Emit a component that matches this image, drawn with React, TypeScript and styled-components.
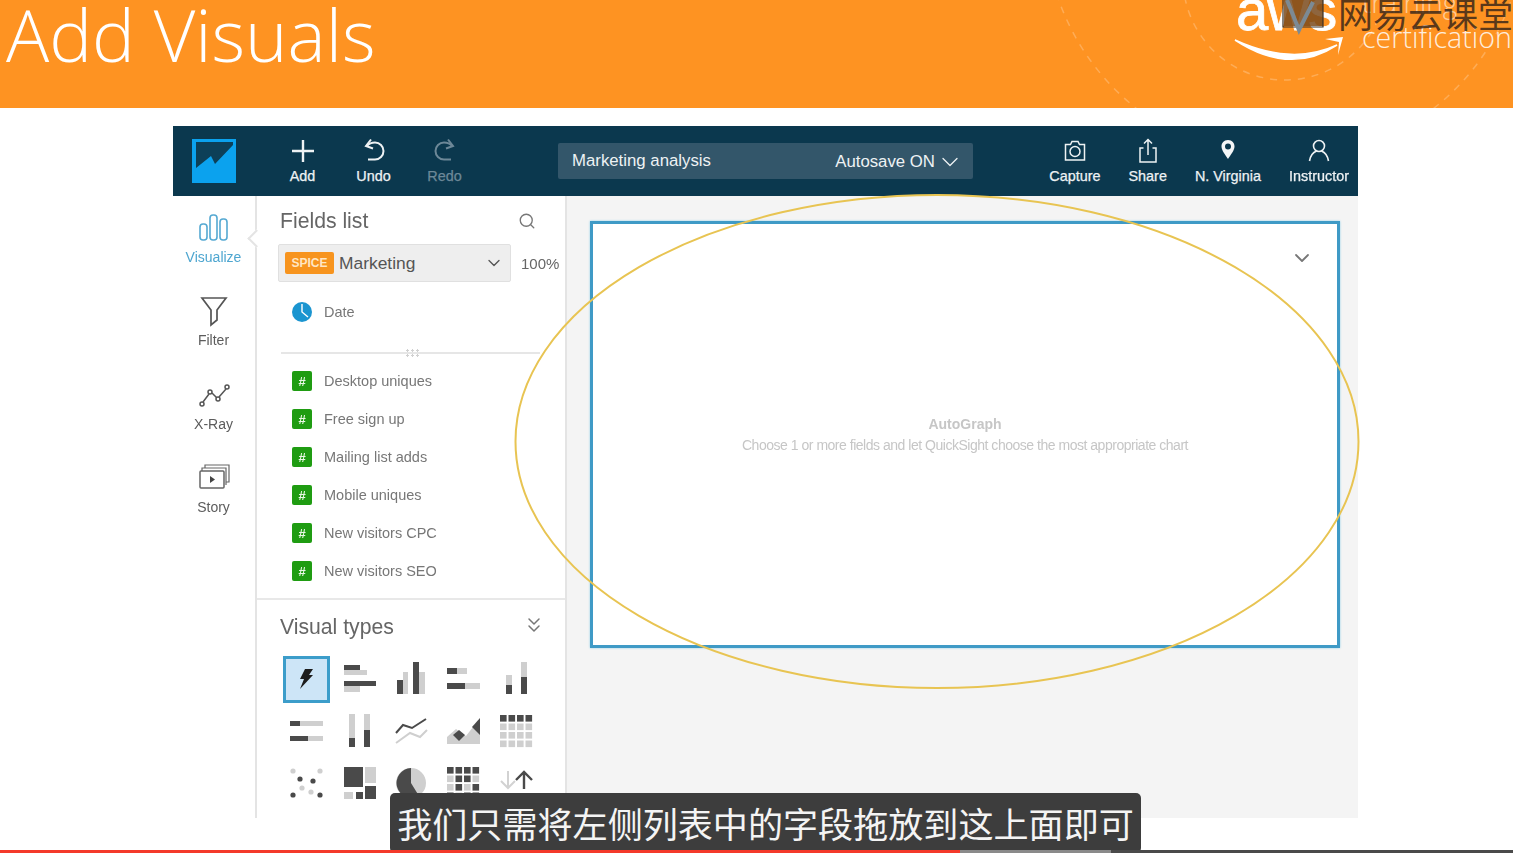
import React from "react";
import styled, { createGlobalStyle } from "styled-components";
import { Search, ChevronDown, ChevronsDown } from "lucide-react";

const Global = createGlobalStyle`
  html, body { margin: 0; padding: 0; background: #fff; }
  body { font-family: "Liberation Sans", Arial, sans-serif; }
`;

const Page = styled.div`
  position: relative;
  width: 1513px;
  height: 853px;
  overflow: hidden;
  background: #fff;
`;
const Blurred = styled.div`
  filter: blur(0.55px);
`;
const Banner = styled.header`
  position: relative;
  height: 108px;
  background: #fe9322;
  overflow: hidden;
  padding-left: 6px;
  box-sizing: border-box;
`;
const Title = styled.h1`
  margin: 0;
  font: 300 72px/69px "Open Sans", sans-serif;
  color: #fff;
`;
const BannerArt = styled.svg`
  position: absolute;
  inset: 0;
`;
const Watermark = styled.span`
  position: absolute;
  left: 1338px;
  top: -9px;
  font: 400 35px/44px "Noto Sans CJK SC", sans-serif;
  color: rgba(60, 40, 25, 0.85);
  white-space: nowrap;
`;
const Workspace = styled.main`
  width: 1185px;
  margin: 18px 0 0 173px;
`;
const Toolbar = styled.div`
  height: 70px;
  background: #0b384e;
  display: flex;
  align-items: center;
`;
const LogoCell = styled.div`
  width: 81px;
  padding-left: 19px;
  box-sizing: border-box;
  display: flex;
  align-items: center;
`;
const ToolGroup = styled.div`
  display: flex;
  margin-left: 13px;
`;
const Tool = styled.div<{ $muted?: boolean }>`
  width: 71px;
  display: flex;
  flex-direction: column;
  align-items: center;
  color: ${(p) => (p.$muted ? "#6d8898" : "#eef2f4")};
  font-size: 14.4px;
  line-height: 18px;
  -webkit-text-stroke: 0.25px currentColor;
  & > svg { height: 26px; margin-bottom: 3px; }
`;
const TitleBar = styled.div`
  width: 415px;
  height: 36px;
  margin-left: 78px;
  padding: 0 9px 0 14px;
  box-sizing: border-box;
  background: #33566a;
  border-radius: 2px;
  display: flex;
  align-items: center;
  justify-content: space-between;
  font-size: 16.8px;
  color: #eef2f4;
`;
const Autosave = styled.span`
  display: flex;
  align-items: center;
  gap: 1px;
  padding-top: 1px;
`;
const RightTools = styled.div`
  margin-left: auto;
  padding-right: 9px;
  display: flex;
  gap: 28px;
`;
const RightTool = styled.div`
  display: flex;
  flex-direction: column;
  align-items: center;
  color: #eef2f4;
  font-size: 14.4px;
  line-height: 18px;
  -webkit-text-stroke: 0.25px currentColor;
  & > svg { height: 26px; margin-bottom: 3px; }
`;
const Body = styled.div`
  display: flex;
  height: 622px;
`;
const Rail = styled.nav`
  position: relative;
  width: 84px;
  box-sizing: border-box;
  border-right: 2px solid #e4e4e4;
  padding: 16px 1px 0 0;
  &::after {
    content: "";
    position: absolute;
    right: -7.5px;
    top: 35.5px;
    width: 13px;
    height: 13px;
    box-sizing: border-box;
    background: #fff;
    border-left: 2px solid #e4e4e4;
    border-bottom: 2px solid #e4e4e4;
    transform: rotate(45deg);
  }
`;
const RailItem = styled.div<{ $active?: boolean }>`
  height: 83.4px;
  display: flex;
  flex-direction: column;
  align-items: center;
  color: ${(p) => (p.$active ? "#4ea6d0" : "#5c5c5c")};
  font-size: 14px;
  line-height: 18px;
  & > svg { margin-bottom: 4px; }
`;
const Panel = styled.aside`
  width: 310px;
  box-sizing: border-box;
  border-right: 2px solid #e4e4e4;
  display: flex;
  flex-direction: column;
`;
const FieldsSection = styled.section`
  height: 404px;
  box-sizing: border-box;
  border-bottom: 2px solid #e8e8e8;
  padding-left: 21px;
`;
const SectionHeader = styled.div`
  display: flex;
  align-items: center;
  justify-content: space-between;
  padding: 2px 29px 0 2px;
  height: 48px;
  box-sizing: border-box;
  color: #666;
  font-size: 21.2px;
`;
const SelectRow = styled.div`
  display: flex;
  align-items: center;
  gap: 10px;
  font-size: 15px;
  color: #666;
`;
const Select = styled.div`
  width: 233px;
  height: 38px;
  box-sizing: border-box;
  padding: 0 6px 0 6px;
  background: #eeeeee;
  border: 1px solid #e0e0e0;
  border-radius: 2px;
  display: flex;
  align-items: center;
  gap: 5px;
  color: #555;
  font-size: 17.4px;
`;
const Spice = styled.span`
  width: 49px;
  height: 22px;
  background: #f7941e;
  border-radius: 2px;
  display: flex;
  align-items: center;
  justify-content: center;
  color: #ffe6c4;
  font-size: 12px;
  font-weight: 700;
`;
const Grow = styled.span`
  flex: 1;
`;
const FieldRow = styled.div`
  height: 38px;
  display: flex;
  align-items: center;
  gap: 12px;
  padding-left: 14px;
  color: #777;
  font-size: 14.5px;
`;
const DateGroup = styled.div`
  margin-top: 11px;
`;
const Divider = styled.div`
  position: relative;
  margin: 21px 25px 8px 3px;
  height: 2px;
  background: #e6e6e6;
  &::after {
    content: "";
    position: absolute;
    left: 124px;
    top: -4px;
    width: 14px;
    height: 9px;
    background-image: radial-gradient(circle, #d0d0d0 1px, transparent 1.2px);
    background-size: 5px 5px;
  }
`;
const NumBadge = styled.span`
  width: 20px;
  height: 20px;
  background: #1f9c12;
  border-radius: 2px;
  color: #e8f7e4;
  font-size: 13px;
  font-weight: 700;
  display: flex;
  align-items: center;
  justify-content: center;
`;
const VisualSection = styled.section`
  padding-left: 23px;
`;
const VisualHeader = styled(SectionHeader)`
  height: 50px;
  padding: 3px 19px 0 0;
  & > svg { margin-top: -4px; }
`;
const VisualGrid = styled.div`
  display: grid;
  grid-template-columns: repeat(5, 52.4px);
  grid-auto-rows: 52px;
  margin-top: 3px;
`;
const VisualCell = styled.div`
  display: flex;
  align-items: center;
  justify-content: center;
`;
const SelectedBox = styled.div`
  width: 47px;
  height: 47px;
  box-sizing: border-box;
  background: #cde5f7;
  border: 3px solid #3c9dca;
  display: flex;
  align-items: center;
  justify-content: center;
`;
const Canvas = styled.section`
  flex: 1;
  background: #f4f4f4;
  padding: 25px 18px 0 23px;
`;
const Sheet = styled.div`
  position: relative;
  height: 427px;
  box-sizing: border-box;
  background: #fff;
  border: 3px solid #3f9ac6;
  box-shadow: 0 0 2px #8fd0ea;
  display: flex;
  flex-direction: column;
  align-items: center;
  justify-content: center;
  color: #c6c6c6;
  font-size: 14px;
  line-height: 21px;
  letter-spacing: -0.48px;
`;
const SheetTitle = styled.strong`
  font-weight: 700;
  letter-spacing: 0;
`;
const SheetMenu = styled.span`
  position: absolute;
  right: 23px;
  top: 22px;
  color: #777;
  display: flex;
`;
const Ellipse = styled.svg`
  position: absolute;
  inset: 0;
  pointer-events: none;
`;
const Caption = styled.div`
  position: absolute;
  left: 390px;
  top: 793px;
  width: 751px;
  height: 60px;
  box-sizing: border-box;
  padding-top: 3px;
  background: #3d3d3d;
  border-radius: 5px;
  color: #f4f4f4;
  text-align: center;
  font: 400 35.1px/54px "Noto Sans CJK SC", sans-serif;
  white-space: nowrap;
`;
const Progress = styled.div`
  position: absolute;
  left: 0;
  right: 0;
  bottom: 0;
  height: 3px;
  display: flex;
  background: #4a4a4a;
`;
const ProgressPart = styled.div<{ $w: number; $c: string }>`
  width: ${(p) => p.$w}px;
  background: ${(p) => p.$c};
`;

const D = "#4a4a4a";
const L = "#cfcfcf";
type R = [number, number, number, number, string];
const Bars = ({ r, x0, y0 }: { r: R[]; x0: number; y0: number }) => (
  <svg width="36" height="36" viewBox={`${x0} ${y0} 36 36`}>
    {r.map(([x, y, w, h, c], i) => (
      <rect key={i} x={x} y={y} width={w} height={h} fill={c} />
    ))}
  </svg>
);
const gridRects = (x: number, y: number, pattern: string[]): R[] =>
  pattern.flatMap((row, j) =>
    row.split("").map((ch, i): R => [x + i * 8.5, y + j * 8.5, 6.6, 6.6, ch === "d" ? D : L])
  );

const visualIcons: React.ReactNode[] = [
  <SelectedBox key="a">
    <svg width="22" height="24" viewBox="0 0 22 24">
      <path d="M10 2 L18 2 L14 8 L18 8 L5 22 L9 12 L5 12 Z" fill="#1d1d1d" />
    </svg>
  </SelectedBox>,
  <Bars key="b" x0={340} y0={661} r={[[343, 665, 16, 5, D], [343, 670, 23, 5, L], [343, 681, 32, 5, D], [343, 686, 16, 6, L]]} />,
  <Bars key="c" x0={393} y0={661} r={[[397, 680, 6, 14, D], [403, 672, 5, 22, L], [413, 662, 6, 32, D], [419, 672, 6, 22, L]]} />,
  <Bars key="d" x0={445} y0={661} r={[[447, 668, 10, 6, D], [457, 668, 10, 6, L], [447, 683, 18, 6, D], [465, 683, 15, 6, L]]} />,
  <Bars key="e" x0={498} y0={661} r={[[506, 675, 6, 10, L], [506, 685, 6, 9, D], [521, 662, 6, 15, L], [521, 677, 6, 17, D]]} />,
  <Bars key="f" x0={288} y0={713} r={[[290, 721, 10, 5, D], [300, 721, 23, 5, L], [290, 736, 18, 5, D], [308, 736, 15, 5, L]]} />,
  <Bars key="g" x0={340} y0={713} r={[[348, 714, 6, 24, L], [348, 738, 6, 9, D], [363, 714, 6, 16, L], [363, 730, 6, 17, D]]} />,
  <svg key="h" width="36" height="36" viewBox="393 713 36 36">
    <polyline points="396,743 410,733 420,737 427,730" fill="none" stroke={L} strokeWidth="2" />
    <polyline points="396,733 403,725 412,728 426,719" fill="none" stroke={D} strokeWidth="2" />
  </svg>,
  <svg key="i" width="36" height="36" viewBox="445 713 36 36">
    <polygon points="447,744 447,737 456,729 466,736 473,727 480,733 480,744" fill={L} />
    <polygon points="453,735 459,730 465,735 459,741" fill={D} />
    <polygon points="472,727 480,718 480,735" fill={D} />
  </svg>,
  <Bars key="j" x0={498} y0={713} r={gridRects(500, 715, ["dddd", "llll", "llll", "llll"])} />,
  <svg key="k" width="36" height="36" viewBox="288 765 36 36">
    {[[293, 771, L], [320, 771, L], [300, 779, D], [313, 781, D], [302, 788, L], [311, 792, L], [293, 795, D], [320, 795, D]].map(([x, y, c], i) => (
      <circle key={i} cx={x as number} cy={y as number} r="2.6" fill={c as string} />
    ))}
  </svg>,
  <Bars key="l" x0={340} y0={765} r={[[343, 767, 19, 20, D], [364, 767, 11, 16, L], [343, 792, 9, 7, L], [355, 792, 7, 7, D], [364, 786, 11, 13, D]]} />,
  <svg key="m" width="36" height="36" viewBox="393 765 36 36">
    <circle cx="411" cy="783" r="15" fill={L} />
    <path d="M411 783 L411 768 A15 15 0 1 0 419 796 Z" fill={D} />
  </svg>,
  <Bars key="n" x0={445} y0={765} r={gridRects(447, 767, ["dddd", "lddl", "ldld", "dldd"])} />,
  <svg key="o" width="36" height="36" viewBox="498 765 36 36">
    <path d="M508 771 V788 M501 781 L508 788 L515 781" fill="none" stroke="#d2d2d2" strokeWidth="2" />
    <path d="M524 789 V772 M516 780 L524 772 L532 780" fill="none" stroke={D} strokeWidth="2.4" />
  </svg>,
];

const fields = ["Desktop uniques", "Free sign up", "Mailing list adds", "Mobile uniques", "New visitors CPC", "New visitors SEO"];

const Logo = () => (
  <svg width="44" height="44" viewBox="0 0 44 44">
    <rect width="44" height="44" fill="#0ba2ee" />
    <polygon points="4,3 41,3 41,6 23,25 19,17 4,29" fill="#0d4058" />
  </svg>
);

const TurnArrow = ({ flip, color }: { flip?: boolean; color: string }) => (
  <svg width="28" height="26" viewBox="0 0 28 26" fill="none" stroke={color} strokeWidth="2">
    <g transform={flip ? "translate(28,0) scale(-1,1)" : undefined}>
      <path d="M7 8 C9 5.5 12 4.5 15 4.5 A8.5 8.5 0 0 1 15 21.5 H8" />
      <path d="M11 1.5 L6 8 L13 10.5" />
    </g>
  </svg>
);

export default function App() {
  return (
    <Page>
      <Global />
      <Blurred>
        <Banner>
          <Title>Add Visuals</Title>
          <BannerArt width="1513" height="108" viewBox="0 0 1513 108">
            <g fill="none" stroke="#ffffff" strokeOpacity="0.24" strokeWidth="1.5" strokeDasharray="7 7">
              <circle cx="1285" cy="-22" r="102" />
              <circle cx="1285" cy="-80" r="240" />
            </g>
            <text x="1236" y="30" fill="#fff" stroke="#fff" strokeWidth="0.8" fontFamily="Liberation Sans" fontSize="58" letterSpacing="-1">aws</text>
            <path d="M1235 40 Q1290 76 1337 45 Q1292 66 1235 40 Z" fill="#fff" stroke="#fff" strokeWidth="1.5" />
            <path d="M1325 39 L1343 37 L1338 55 L1339 42 Z" fill="#fff" />
            <text x="1362" y="13" fill="#fff" fillOpacity="0.55" fontFamily="Open Sans" fontWeight="300" fontSize="28">training</text>
            <text x="1362" y="48" fill="#fff" fillOpacity="0.85" fontFamily="Open Sans" fontWeight="300" fontSize="28.6">certification</text>
            <polygon points="1284,0 1323,0 1323,26 1284,26" fill="#7a4a1c" fillOpacity="0.85" />
            <path d="M1283 0 V27 H1323 V0" fill="none" stroke="#3b3026" strokeWidth="1.2" />
            <path d="M1287 0 L1299 30 L1313 2" fill="none" stroke="#7c8a94" strokeWidth="4" />
          </BannerArt>
          <Watermark>网易云课堂</Watermark>
        </Banner>
        <Workspace>
          <Toolbar>
            <LogoCell><Logo /></LogoCell>
            <ToolGroup>
              <Tool>
                <svg width="26" height="26" viewBox="0 0 26 26" fill="none" stroke="#eef2f4" strokeWidth="2.4">
                  <path d="M13 2 V24 M2 13 H24" />
                </svg>
                <span>Add</span>
              </Tool>
              <Tool><TurnArrow color="#eef2f4" /><span>Undo</span></Tool>
              <Tool $muted><TurnArrow flip color="#6d8898" /><span>Redo</span></Tool>
            </ToolGroup>
            <TitleBar>
              <span>Marketing analysis</span>
              <Autosave>Autosave ON <ChevronDown size={28} strokeWidth={1.1} /></Autosave>
            </TitleBar>
            <RightTools>
              <RightTool>
                <svg width="24" height="26" viewBox="0 0 24 26" fill="none" stroke="#eef2f4" strokeWidth="1.5">
                  <path d="M2.5 6.5 H7.5 L9 3.5 H15 L16.5 6.5 H21.5 V22 H2.5 Z" />
                  <circle cx="12" cy="13.5" r="5" />
                </svg>
                <span>Capture</span>
              </RightTool>
              <RightTool>
                <svg width="22" height="26" viewBox="0 0 22 26" fill="none" stroke="#eef2f4" strokeWidth="1.5">
                  <path d="M6.5 10 H3 V24 H19 V10 H15.5" />
                  <path d="M11 17 V2 M7 5.5 L11 1.5 L15 5.5" />
                </svg>
                <span>Share</span>
              </RightTool>
              <RightTool>
                <svg width="16" height="26" viewBox="0 0 16 26">
                  <path fillRule="evenodd" d="M8 2 C3.8 2 1.5 5 1.5 8.5 C1.5 12.5 5.5 17 8 21 C10.5 17 14.5 12.5 14.5 8.5 C14.5 5 12.2 2 8 2 Z M8 5.5 A3 3 0 1 1 8 11.5 A3 3 0 1 1 8 5.5 Z" fill="#f4f6f7" />
                </svg>
                <span>N. Virginia</span>
              </RightTool>
              <RightTool>
                <svg width="24" height="26" viewBox="0 0 24 26" fill="none" stroke="#eef2f4" strokeWidth="1.6">
                  <circle cx="12" cy="8" r="5.5" />
                  <path d="M2.5 23 C3.5 17 7 14 9.5 13 M21.5 23 C20.5 17 17 14 14.5 13" />
                </svg>
                <span>Instructor</span>
              </RightTool>
            </RightTools>
          </Toolbar>
          <Body>
            <Rail>
              <RailItem $active>
                <svg width="32" height="32" viewBox="0 0 32 32" fill="none" stroke="#55a9d2" strokeWidth="1.6">
                  <rect x="2" y="12" width="7" height="16" rx="3" />
                  <rect x="12" y="3" width="7" height="25" rx="3" />
                  <rect x="22" y="7" width="7" height="21" rx="3" />
                </svg>
                <span>Visualize</span>
              </RailItem>
              <RailItem>
                <svg width="32" height="32" viewBox="0 0 32 32" fill="none" stroke="#555" strokeWidth="1.7">
                  <path d="M4 3 H28 L19 15 V25 L13 30 V15 Z" />
                </svg>
                <span>Filter</span>
              </RailItem>
              <RailItem>
                <svg width="32" height="32" viewBox="0 0 32 32" fill="none" stroke="#555" strokeWidth="1.5">
                  <circle cx="4" cy="25" r="2" />
                  <circle cx="12" cy="13" r="2" />
                  <circle cx="20" cy="20" r="2" />
                  <circle cx="29" cy="8" r="2" />
                  <path d="M5 23 L11 15 M14 14 L18.5 18.5 M21 18 L28 10" />
                </svg>
                <span>X-Ray</span>
              </RailItem>
              <RailItem>
                <svg width="32" height="32" viewBox="0 0 32 32" fill="none" stroke="#666" strokeWidth="1.5">
                  <path d="M7 6 V3 H31 V20 H28" strokeWidth="1.2" />
                  <path d="M4 9 V6 H28 V23" strokeWidth="1.2" />
                  <rect x="2" y="9" width="24" height="17" rx="1" />
                  <path d="M12 14 L17 17.5 L12 21 Z" fill="#444" stroke="none" />
                </svg>
                <span>Story</span>
              </RailItem>
            </Rail>
            <Panel>
              <FieldsSection>
                <SectionHeader>
                  <span>Fields list</span>
                  <Search size={18} strokeWidth={1.8} color="#777" />
                </SectionHeader>
                <SelectRow>
                  <Select>
                    <Spice>SPICE</Spice>
                    <span>Marketing</span>
                    <Grow />
                    <ChevronDown size={20} strokeWidth={1.6} color="#555" />
                  </Select>
                  <span>100%</span>
                </SelectRow>
                <DateGroup>
                  <FieldRow>
                    <svg width="20" height="20" viewBox="0 0 20 20">
                      <circle cx="10" cy="10" r="10" fill="#1b95d0" />
                      <path d="M10 2 V10 L16 15" fill="none" stroke="#fff" strokeWidth="1.4" />
                    </svg>
                    <span>Date</span>
                  </FieldRow>
                </DateGroup>
                <Divider />
                {fields.map((f) => (
                  <FieldRow key={f}>
                    <NumBadge>#</NumBadge>
                    <span>{f}</span>
                  </FieldRow>
                ))}
              </FieldsSection>
              <VisualSection>
                <VisualHeader>
                  <span>Visual types</span>
                  <ChevronsDown size={24} strokeWidth={1.5} color="#777" />
                </VisualHeader>
                <VisualGrid>
                  {visualIcons.map((icon, i) => (
                    <VisualCell key={i}>{icon}</VisualCell>
                  ))}
                </VisualGrid>
              </VisualSection>
            </Panel>
            <Canvas>
              <Sheet>
                <SheetTitle>AutoGraph</SheetTitle>
                <span>Choose 1 or more fields and let QuickSight choose the most appropriate chart</span>
                <SheetMenu><ChevronDown size={24} strokeWidth={1.8} /></SheetMenu>
              </Sheet>
            </Canvas>
          </Body>
        </Workspace>
      </Blurred>
      <Ellipse width="1513" height="853" viewBox="0 0 1513 853">
        <ellipse cx="937" cy="441.5" rx="421.5" ry="246.5" fill="none" stroke="#e8c452" strokeWidth="2" />
      </Ellipse>
      <Caption>我们只需将左侧列表中的字段拖放到这上面即可</Caption>
      <Progress>
        <ProgressPart $w={960} $c="#f4392a" />
        <ProgressPart $w={151} $c="#8a8a8a" />
      </Progress>
    </Page>
  );
}
